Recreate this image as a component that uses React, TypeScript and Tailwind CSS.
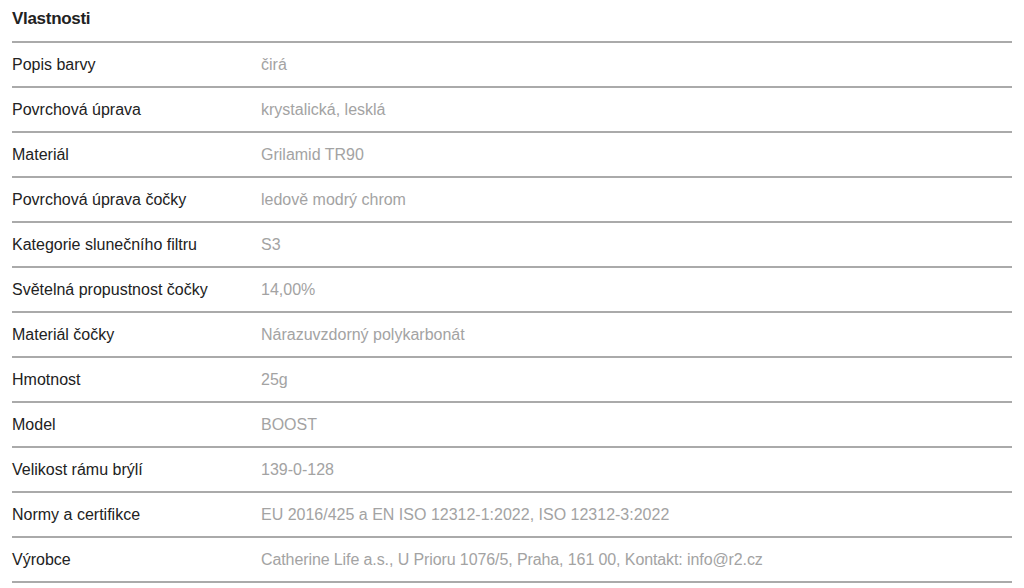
const rows: [string, string][] = [
  ["Popis barvy", "čirá"],
  ["Povrchová úprava", "krystalická, lesklá"],
  ["Materiál", "Grilamid TR90"],
  ["Povrchová úprava čočky", "ledově modrý chrom"],
  ["Kategorie slunečního filtru", "S3"],
  ["Světelná propustnost čočky", "14,00%"],
  ["Materiál čočky", "Nárazuvzdorný polykarbonát"],
  ["Hmotnost", "25g"],
  ["Model", "BOOST"],
  ["Velikost rámu brýlí", "139-0-128"],
  ["Normy a certifikce", "EU 2016/425 a EN ISO 12312-1:2022, ISO 12312-3:2022"],
  ["Výrobce", "Catherine Life a.s., U Prioru 1076/5, Praha, 161 00, Kontakt: info@r2.cz"],
];

export default function App() {
  return (
    <div className="min-h-[588px] bg-white px-3 font-['Liberation_Sans',Arial,sans-serif]">
      <h2 className="flex h-[41px] items-center pb-[3px] text-[17px] font-bold tracking-[-0.3px] text-[#222]">
        Vlastnosti
      </h2>
      <div className="border-t-2 border-[#aaaaaa]">
        {rows.map(([label, value]) => (
          <div key={label} className="flex h-[45px] items-center border-b-2 border-[#aaaaaa] pt-[1px] text-[16px]">
            <div className="w-[249px] text-[#222]">{label}</div>
            <div className={label === "Výrobce" ? "tracking-[-0.1px] text-[#a3a3a3]" : "text-[#a3a3a3]"}>
              {value}
            </div>
          </div>
        ))}
      </div>
    </div>
  );
}
